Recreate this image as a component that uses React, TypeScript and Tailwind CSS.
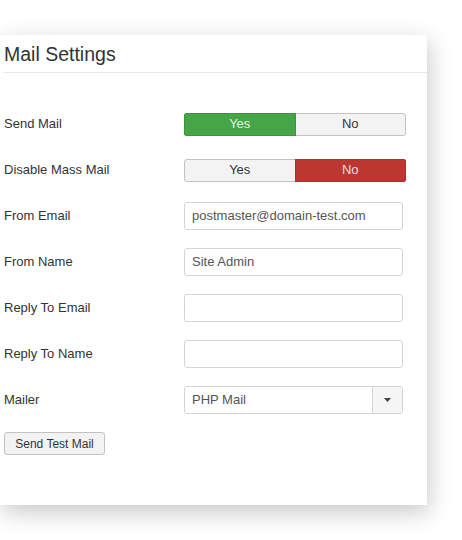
const font = { fontFamily: '"Liberation Sans", Arial, sans-serif' }

function Toggle({ on }: { on: boolean }) {
  return (
    <div className="flex h-[23px] w-[222px] overflow-hidden rounded-[3px] text-[13px]">
      <div
        className={
          on
            ? "flex flex-1 items-center justify-center border border-[#3e933e] bg-[#46a546] text-[#e6f4e6]"
            : "flex flex-1 items-center justify-center rounded-l-[3px] border border-r-0 border-[#c2c2c2] bg-[#f3f3f3] text-[#333]"
        }
      >
        Yes
      </div>
      <div
        className={
          on
            ? "flex flex-1 items-center justify-center rounded-r-[3px] border border-l-0 border-[#c2c2c2] bg-[#f3f3f3] text-[#333]"
            : "flex flex-1 items-center justify-center border border-[#a8312b] bg-[#bd362f] text-[#f6dedd]"
        }
      >
        No
      </div>
    </div>
  )
}

function Field({ value }: { value?: string }) {
  return (
    <div className="flex h-[28px] w-[219px] items-center rounded-[3px] border border-[#d4d4d4] bg-white px-[7px] text-[13px] text-[#555]">
      {value}
    </div>
  )
}

function Row({ label, children }: { label: string; children: React.ReactNode }) {
  return (
    <div className="flex h-[46px] items-center">
      <div className="w-[180px] text-[13px] text-[#333]">{label}</div>
      {children}
    </div>
  )
}

export default function App() {
  return (
    <div className="h-[540px] w-[462px] overflow-hidden bg-white pt-[35px]" style={font}>
      <div className="h-[470px] w-[427px] bg-white pl-[4px] shadow-[2px_7px_22px_rgba(0,0,0,0.22)]">
        <div className="flex h-[38px] items-center border-b border-[#e8e8e8] pt-[2px]">
          <h2 className="text-[19.5px] text-[#333]">Mail Settings</h2>
        </div>
        <div className="pt-[28px]">
          <Row label="Send Mail">
            <Toggle on />
          </Row>
          <Row label="Disable Mass Mail">
            <Toggle on={false} />
          </Row>
          <Row label="From Email">
            <Field value="postmaster@domain-test.com" />
          </Row>
          <Row label="From Name">
            <Field value="Site Admin" />
          </Row>
          <Row label="Reply To Email">
            <Field />
          </Row>
          <Row label="Reply To Name">
            <Field />
          </Row>
          <Row label="Mailer">
            <div className="flex h-[28px] w-[219px] overflow-hidden rounded-[3px] border border-[#d4d4d4] bg-white text-[13px] text-[#555]">
              <div className="flex flex-1 items-center px-[7px]">PHP Mail</div>
              <div className="flex w-[30px] items-center justify-center border-l border-[#d4d4d4] bg-[#f5f5f5]">
                <svg width="7" height="4" viewBox="0 0 7 4">
                  <path d="M0 0h7L3.5 4z" fill="#444" />
                </svg>
              </div>
            </div>
          </Row>
          <button className="mt-[9px] h-[23px] w-[101px] rounded-[3px] border border-[#c2c2c2] bg-[#f3f3f3] text-[12px] text-[#333]">
            Send Test Mail
          </button>
        </div>
      </div>
    </div>
  )
}
